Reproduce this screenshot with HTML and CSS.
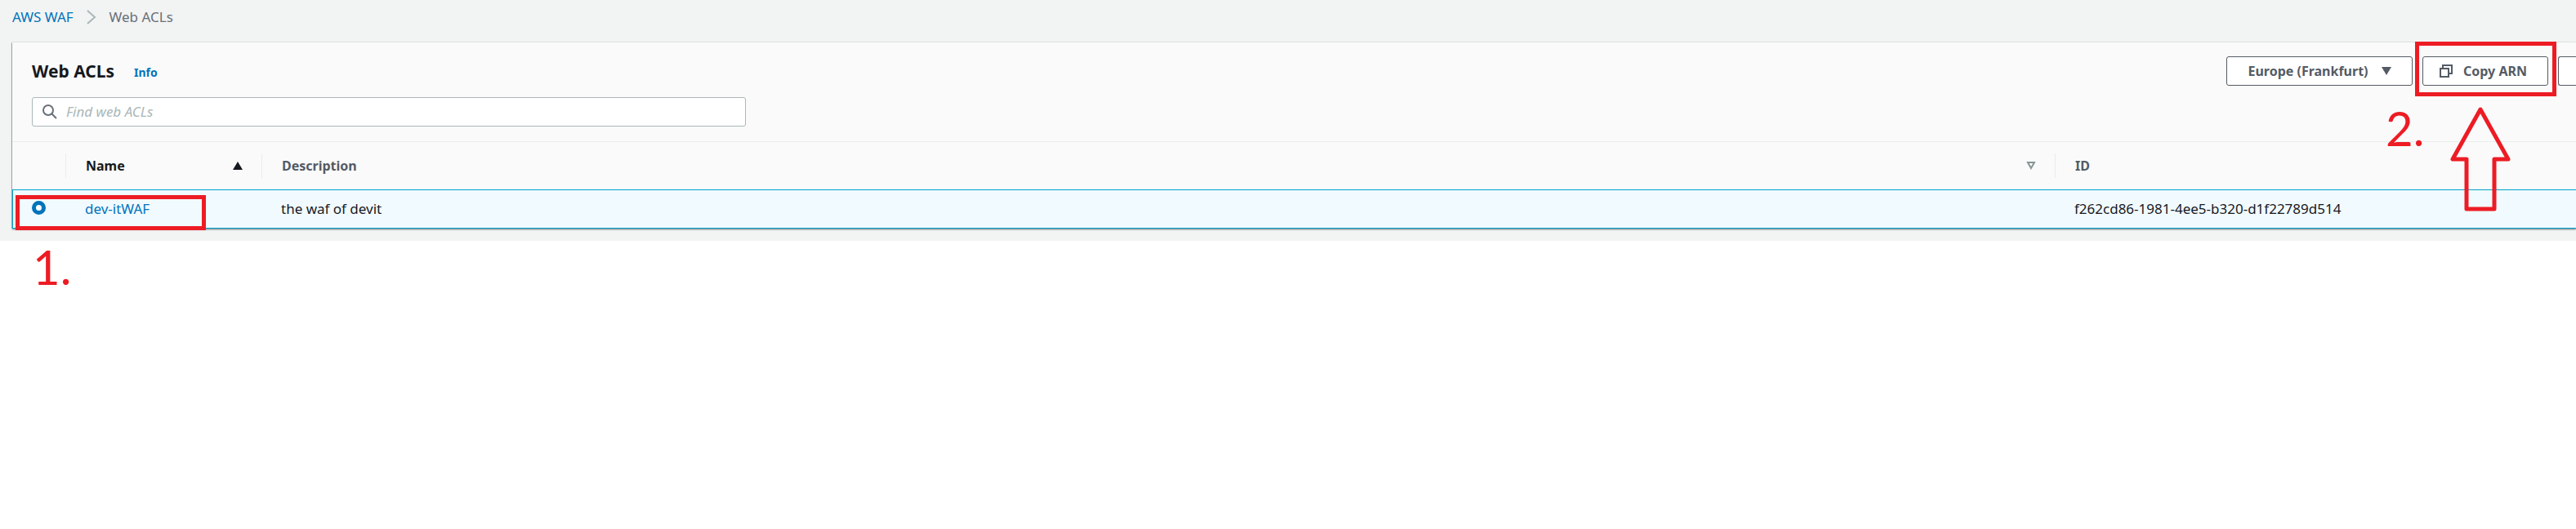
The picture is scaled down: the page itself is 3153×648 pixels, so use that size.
FILE: index.html
```html
<!DOCTYPE html>
<html lang="en">
<head>
<meta charset="utf-8">
<title>AWS WAF - Web ACLs</title>
<link rel="stylesheet" href="styles.css">
</head>
<body>
<main class="page">
  <nav class="breadcrumb" aria-label="Breadcrumb">
    <a href="#">AWS WAF</a>
    <svg class="chevron" width="12" height="18" viewBox="0 0 12 18" aria-hidden="true"><path d="M1 1l9 8-9 8"/></svg>
    <span>Web ACLs</span>
  </nav>

  <section class="card">
    <header class="card-header">
      <div class="title-row">
        <h1 class="title">Web ACLs</h1>
        <a class="info" href="#">Info</a>
        <div class="actions">
          <button class="button region" type="button">Europe (Frankfurt)
            <svg width="12" height="10" viewBox="0 0 12 10" aria-hidden="true"><path d="M0 0h12L6 10z" fill="currentColor"/></svg>
          </button>
          <div class="copy">
            <button class="button copy-button" type="button">
              <svg width="18" height="18" viewBox="0 0 18 18" aria-hidden="true"><path d="M2 6h10v10H2zM5 6V2h11v10h-4" fill="none" stroke="currentColor" stroke-width="2"/></svg>
              Copy ARN
            </button>
            <div class="mark copy-mark"></div>
            <span class="number step-two">2.</span>
            <svg class="arrow" width="74" height="128" viewBox="0 0 74 128" aria-hidden="true"><path d="M37 3L3 64h17v61h34V64h17z"/></svg>
          </div>
          <button class="button clipped" type="button" aria-label="More actions"></button>
        </div>
      </div>
      <label class="search">
        <svg width="18" height="18" viewBox="0 0 18 18" aria-hidden="true"><circle cx="7" cy="7" r="6"/><path d="M11 11l6 6"/></svg>
        <input type="search" placeholder="Find web ACLs" aria-label="Find web ACLs">
      </label>
    </header>

    <table class="table">
      <colgroup><col class="col-select"><col class="col-name"><col><col class="col-id"></colgroup>
      <thead>
        <tr>
          <th aria-label="Select"></th>
          <th class="sorted"><div class="heading">Name
            <svg width="12" height="10" viewBox="0 0 12 10" aria-hidden="true"><path d="M6 0l6 10H0z" fill="currentColor"/></svg></div></th>
          <th><div class="heading">Description
            <svg class="unsorted" width="12" height="10" viewBox="0 0 12 10" aria-hidden="true"><path d="M2 1h8L6 8z" fill="none" stroke="currentColor" stroke-width="2"/></svg></div></th>
          <th><div class="heading">ID</div></th>
        </tr>
      </thead>
      <tbody>
        <tr>
          <td class="select-cell"><input class="radio" type="radio" name="acl" aria-label="dev-itWAF" checked><div class="mark row-mark"></div><span class="number step-one">1.</span></td>
          <td><a href="#">dev-itWAF</a></td>
          <td>the waf of devit</td>
          <td>f262cd86-1981-4ee5-b320-d1f22789d514</td>
        </tr>
      </tbody>
    </table>
  </section>
</main>
</body>
</html>
```
FILE: styles.css
```css
* { box-sizing: border-box; }

body {
  min-height: 100vh;
  margin: 0;
  background: #fff;
  color: #16191f;
  font: 17px/22px "Noto Sans", "Open Sans", sans-serif;
}

a { color: #0073bb; text-decoration: none; }

.page {
  padding: 10px 0 15px 15px;
  background: #f2f3f3;
}

.breadcrumb {
  display: flex;
  align-items: center;
  gap: 16px;
  height: 22px;
  margin-bottom: 20px;
  color: #687078;
}
.chevron { fill: none; stroke: #aab7b8; stroke-width: 2; }

.card {
  background: #fafafa;
  box-shadow: 0 1px 2px #001c2499, -1px 0 0 #c3c6ca, 0 -1px 0 #eaeded;
}

.card-header {
  padding: 17px 0 18px 24px;
  border-bottom: 1px solid #eaeded;
}
.title-row { display: flex; align-items: center; height: 36px; }
.title { margin: 0; font-size: 21px; line-height: 28px; }
.info { margin: 4px 0 0 24px; font-size: 14px; font-weight: 700; }

.actions { display: flex; gap: 12px; margin-left: auto; }
.button {
  display: flex;
  align-items: center;
  justify-content: center;
  gap: 16px;
  height: 36px;
  padding: 0;
  border: 1px solid #545b64;
  border-radius: 3px;
  background: #fff;
  color: #545b64;
  font: inherit;
  font-size: 16px;
  font-weight: 700;
}
.region { width: 228px; }
.copy { position: relative; }
.copy-button { width: 154px; padding-right: 6px; gap: 12px; }
.clipped { width: 22px; border-right: 0; border-radius: 3px 0 0 3px; }

.search {
  display: flex;
  align-items: center;
  gap: 11px;
  width: 100%;
  max-width: 874px;
  height: 36px;
  margin-top: 14px;
  padding: 0 12px;
  border: 1px solid #aab7b8;
  border-radius: 3px;
  background: #fff;
}
.search svg { flex: none; fill: none; stroke: #687078; stroke-width: 2; }
.search input {
  flex: 1;
  min-width: 0;
  padding: 0;
  border: 0;
  outline: 0;
  background: none;
  font: inherit;
}
.search input::placeholder { color: #aab7b8; font-style: italic; opacity: 1; }

.table {
  width: 100%;
  border-collapse: separate;
  border-spacing: 0;
  table-layout: fixed;
}
.col-select { width: 65px; }
.col-name { width: 240px; }
.col-id { width: 638px; }

th { height: 58px; padding: 0; color: #545b64; font-size: 16px; text-align: left; }
.sorted { color: #16191f; }
.heading {
  display: flex;
  align-items: center;
  justify-content: space-between;
  height: 30px;
  padding: 0 23px 0 24px;
  border-left: 1px solid #eaeded;
}
.unsorted { color: #879596; }

td {
  height: 48px;
  padding: 0 24px;
  border-top: 1px solid #00a1c9;
  border-bottom: 1px solid #00a1c9;
  background: #f1faff;
}
td:first-child { padding-left: 23px; border-left: 1px solid #00a1c9; }
.select-cell { position: relative; }

.radio {
  display: block;
  width: 17px;
  height: 17px;
  margin: 0 0 4px;
  border: 5px solid #0073bb;
  border-radius: 50%;
  background: #fff;
  appearance: none;
}

/* Annotations drawn over the console */
.mark { position: absolute; border: 5px solid #ed1c24; pointer-events: none; }
.row-mark { top: 6px; left: 3px; width: 233px; height: 43px; z-index: 1; }
.copy-mark { top: -18px; left: -9px; width: 173px; height: 67px; }
.number {
  position: absolute;
  color: #ed1c24;
  font: 58px/58px Lato, sans-serif;
}
.step-one { top: 65px; left: 24px; }
.step-two { top: 59px; left: -45px; }
.arrow {
  position: absolute;
  top: 62px;
  left: 34px;
  fill: none;
  stroke: #ed1c24;
  stroke-width: 5;
  stroke-linejoin: round;
}
```
